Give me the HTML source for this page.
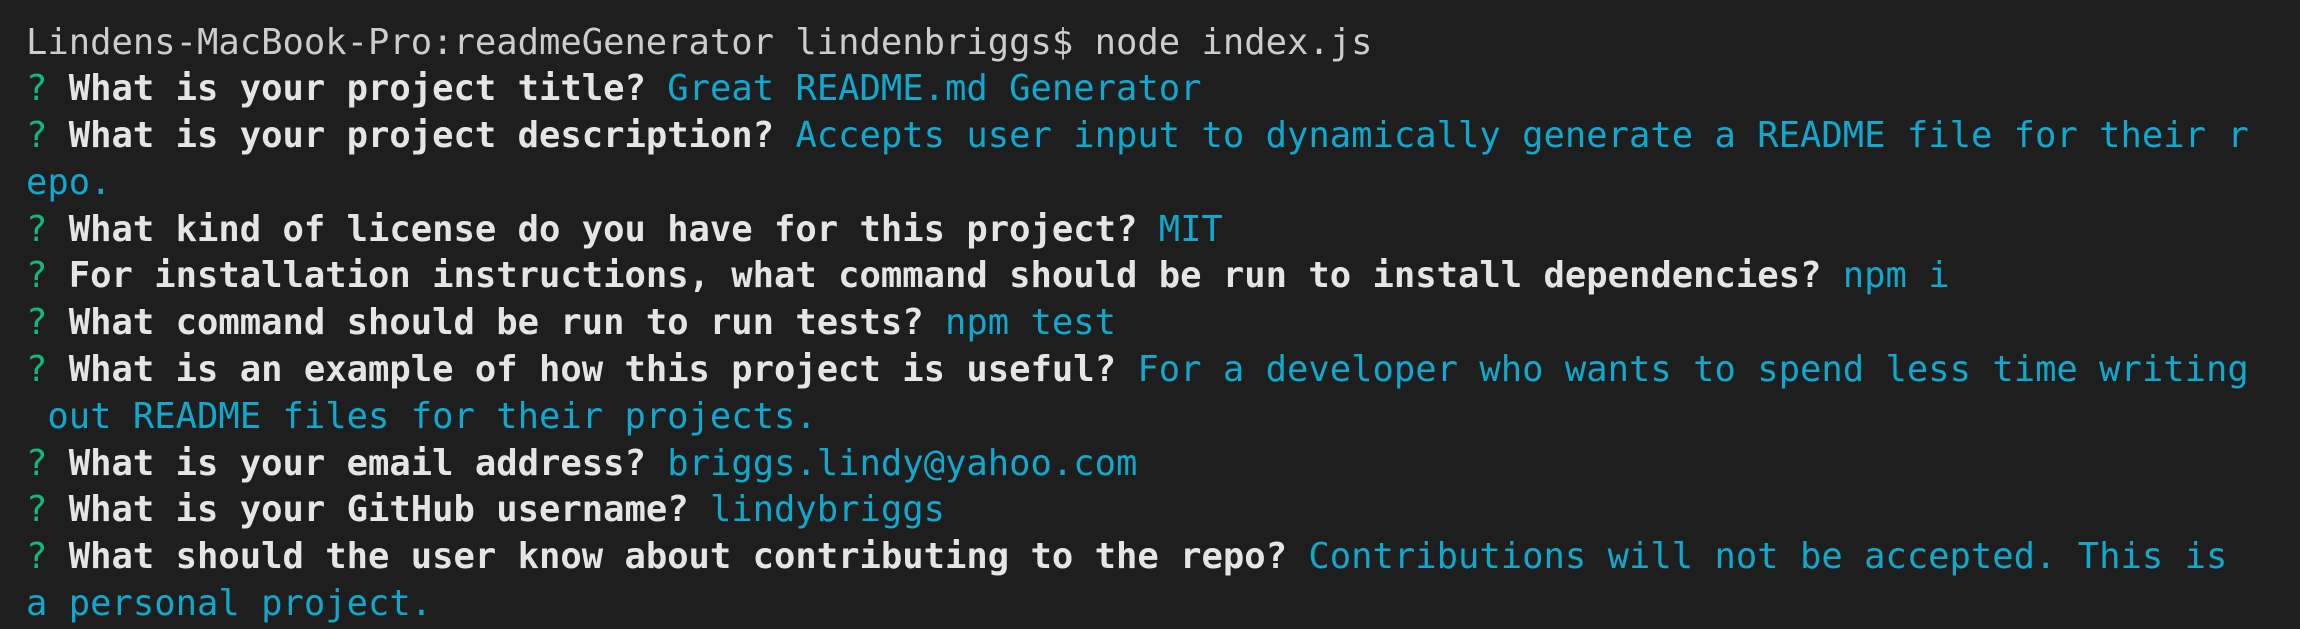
<!DOCTYPE html>
<html><head><meta charset="utf-8"><style>
html,body{margin:0;padding:0;background:#1e1e1e;width:2300px;height:629px;overflow:hidden}
pre{margin:0;padding:19.5px 0 0 26px;font-family:"DejaVu Sans Mono","Liberation Mono",monospace;font-size:35.5px;line-height:46.8px;color:#cccccc;white-space:pre}
.g{color:#0dbc79}.b{font-weight:bold;color:#e5e5e5}.c{color:#11a8cd}
</style></head><body><pre>Lindens-MacBook-Pro:readmeGenerator lindenbriggs$ node index.js
<span class="g">?</span> <span class="b">What is your project title?</span> <span class="c">Great README.md Generator</span>
<span class="g">?</span> <span class="b">What is your project description?</span> <span class="c">Accepts user input to dynamically generate a README file for their r</span>
<span class="c">epo.</span>
<span class="g">?</span> <span class="b">What kind of license do you have for this project?</span> <span class="c">MIT</span>
<span class="g">?</span> <span class="b">For installation instructions, what command should be run to install dependencies?</span> <span class="c">npm i</span>
<span class="g">?</span> <span class="b">What command should be run to run tests?</span> <span class="c">npm test</span>
<span class="g">?</span> <span class="b">What is an example of how this project is useful?</span> <span class="c">For a developer who wants to spend less time writing</span>
<span class="c"> out README files for their projects.</span>
<span class="g">?</span> <span class="b">What is your email address?</span> <span class="c">briggs.lindy@yahoo.com</span>
<span class="g">?</span> <span class="b">What is your GitHub username?</span> <span class="c">lindybriggs</span>
<span class="g">?</span> <span class="b">What should the user know about contributing to the repo?</span> <span class="c">Contributions will not be accepted. This is</span>
<span class="c">a personal project.</span></pre></body></html>
